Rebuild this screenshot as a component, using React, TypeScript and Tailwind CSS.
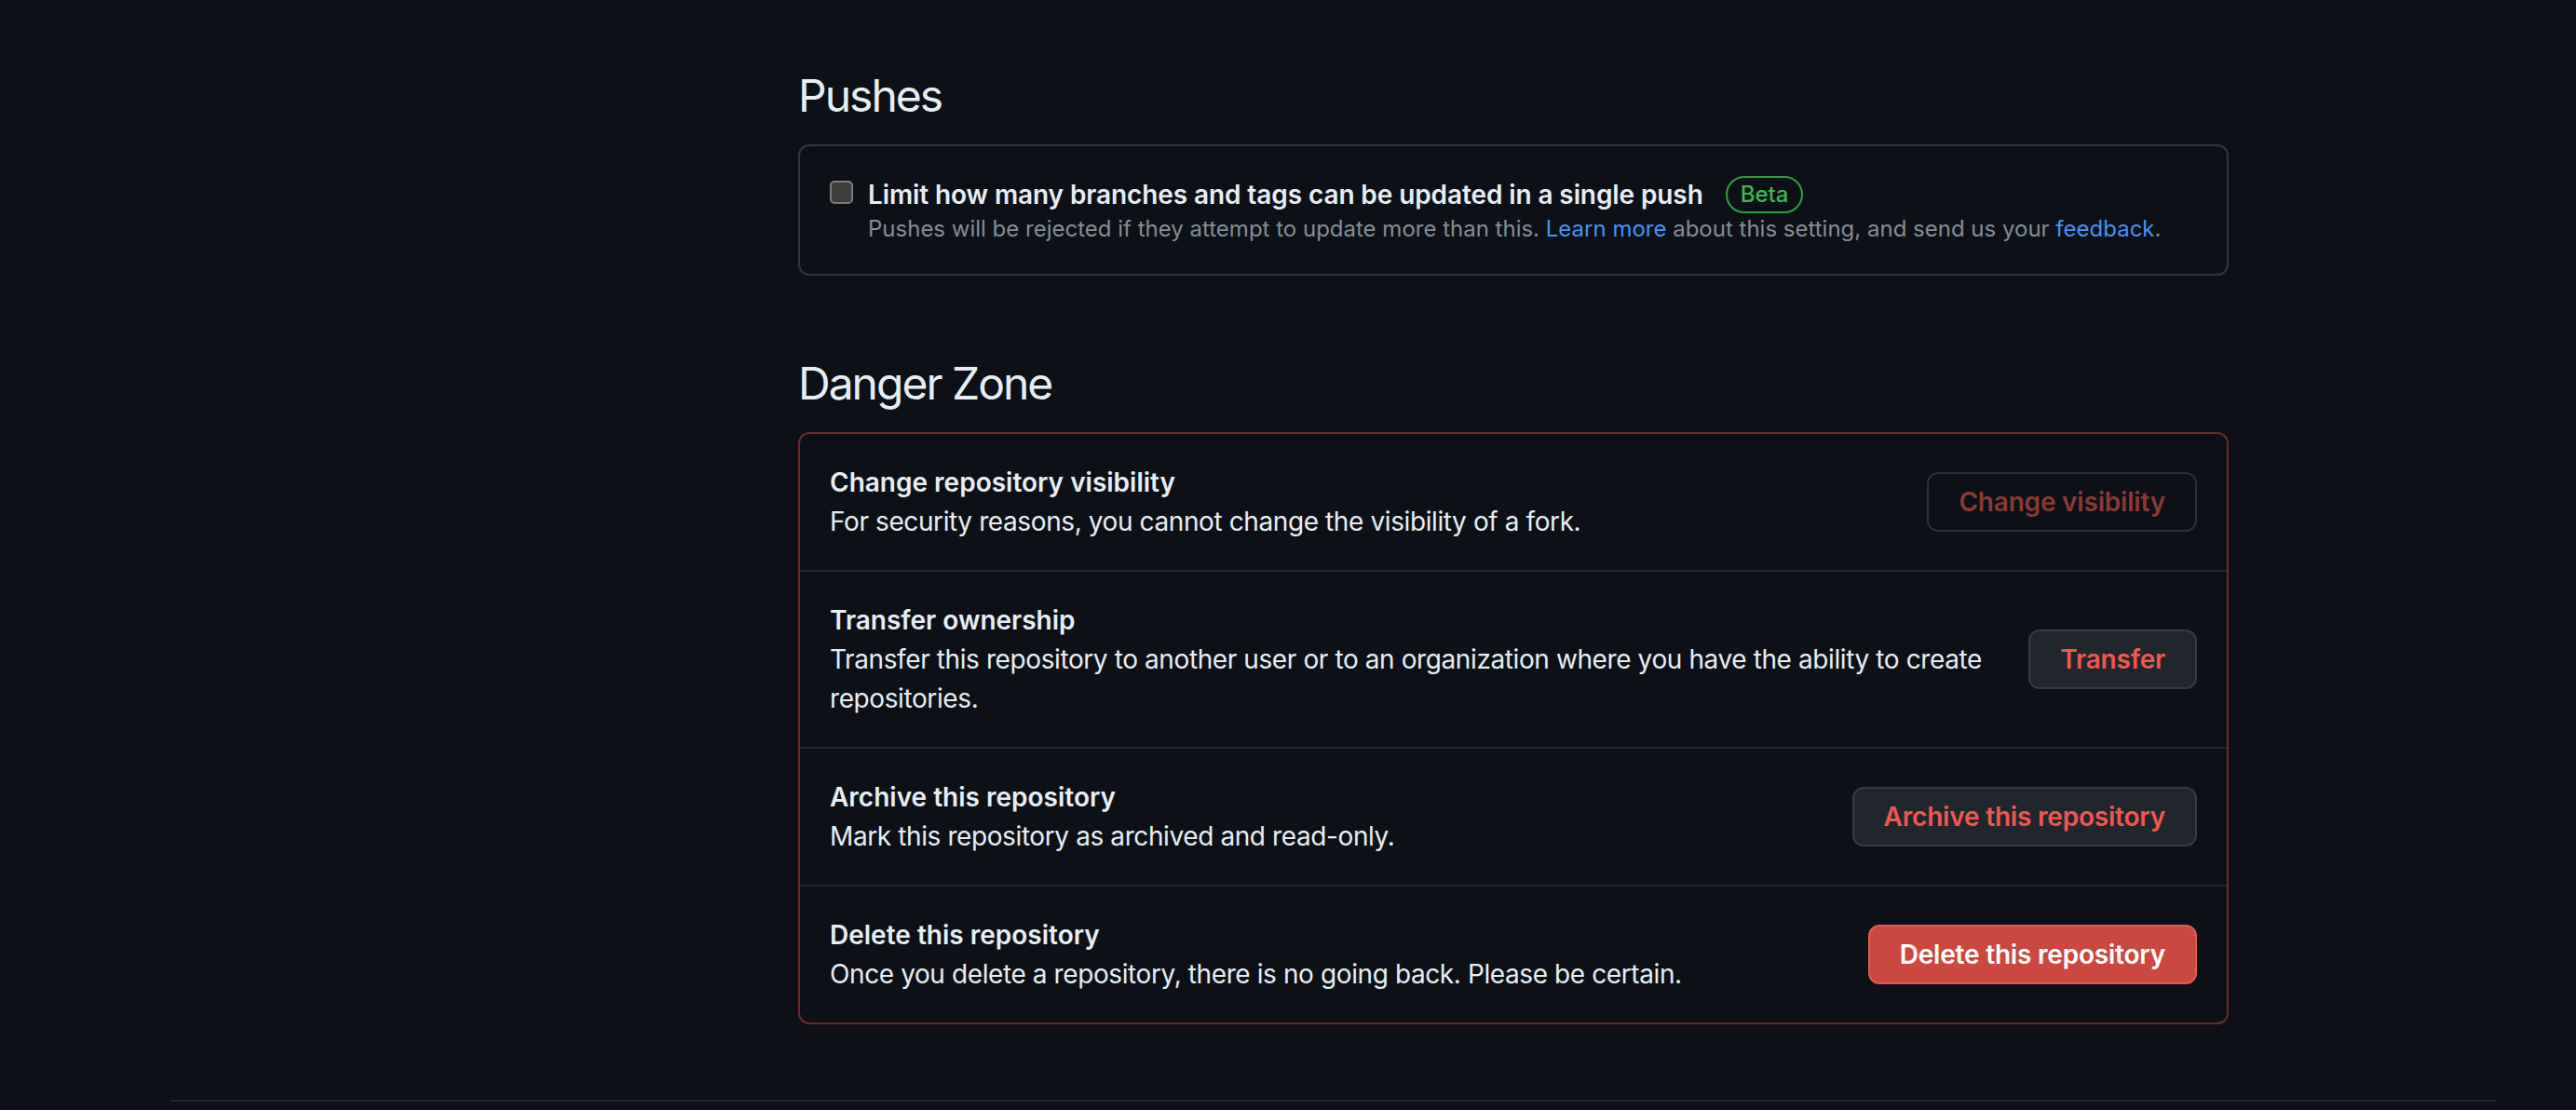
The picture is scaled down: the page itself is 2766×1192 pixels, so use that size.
import React from 'react';

type DangerRow = {
  title: string;
  description: string;
  action: string;
  variant: 'disabled' | 'default' | 'danger';
};

const rows: DangerRow[] = [
  {
    title: 'Change repository visibility',
    description: 'For security reasons, you cannot change the visibility of a fork.',
    action: 'Change visibility',
    variant: 'disabled',
  },
  {
    title: 'Transfer ownership',
    description:
      'Transfer this repository to another user or to an organization where you have the ability to create repositories.',
    action: 'Transfer',
    variant: 'default',
  },
  {
    title: 'Archive this repository',
    description: 'Mark this repository as archived and read-only.',
    action: 'Archive this repository',
    variant: 'default',
  },
  {
    title: 'Delete this repository',
    description: 'Once you delete a repository, there is no going back. Please be certain.',
    action: 'Delete this repository',
    variant: 'danger',
  },
];

const buttonClass: Record<DangerRow['variant'], string> = {
  disabled: 'bg-[#0d1117] border-[#2b3038] text-[#8a3a35] cursor-not-allowed',
  default: 'bg-[#21262d] border-[#363b42] text-[#f0574e]',
  danger: 'bg-[#cb4840] border-[#e25a50] text-white',
};

const Heading = ({ children, className = '' }: { children: React.ReactNode; className?: string }) => (
  <h2 className={`text-[48px] leading-[60px] font-normal tracking-[-2px] text-[#e6edf3] mb-[22px] ${className}`}>
    {children}
  </h2>
);

export default function App() {
  return (
    <div className="min-h-screen w-full bg-[#0d1117] font-['Inter','Noto_Sans',sans-serif] text-[#e6edf3]">
      <div className="ml-[183px] w-[2498px] pb-[40px]">
        <div className="flex">
          <aside className="w-[674px] shrink-0" />
          <main className="w-[1536px] pt-[73px]">
            <Heading>Pushes</Heading>
            <div className="rounded-[12px] border-[2px] border-[#30363d] px-[32px] pt-[32px] pb-[31px]">
              <div className="flex items-start">
                <span className="mt-[5px] mr-[16px] h-[25px] w-[25px] shrink-0 rounded-[5px] border-[2px] border-[#7b7b7b] bg-[#3d3d3d]" />
                <div>
                  <div className="flex h-[40px] items-center">
                    <span className="text-[28px] leading-[40px] font-semibold tracking-[-0.1px]">
                      Limit how many branches and tags can be updated in a single push
                    </span>
                    <span className="ml-[24px] flex h-[40px] items-center rounded-full border-[2px] border-[#2ea043] px-[14px] text-[24px] font-medium text-[#3fb950]">
                      Beta
                    </span>
                  </div>
                  <p className="text-[24px] leading-[34px] text-[#848d97]">
                    Pushes will be rejected if they attempt to update more than this.{' '}
                    <a className="text-[#4493f8]">Learn more</a> about this setting, and send us your{' '}
                    <a className="text-[#4493f8]">feedback</a>.
                  </p>
                </div>
              </div>
            </div>

            <Heading className="mt-[86px]">Danger Zone</Heading>
            <div className="rounded-[12px] border-[2px] border-[#6b2b2b]">
              {rows.map((row, i) => (
                <div
                  key={row.title}
                  className={`flex items-center px-[32px] py-[31px] ${i > 0 ? 'border-t-[2px] border-[#21262d]' : ''}`}
                >
                  <div className="flex-auto pr-[32px] text-[28px] leading-[42px]">
                    <strong className="block font-semibold">{row.title}</strong>
                    <p className="tracking-[-0.4px]">{row.description}</p>
                  </div>
                  <button
                    className={`h-[64px] shrink-0 whitespace-nowrap rounded-[12px] border-[2px] px-[32px] text-[28px] font-semibold tracking-[-0.2px] ${buttonClass[row.variant]}`}
                  >
                    {row.action}
                  </button>
                </div>
              ))}
            </div>
          </main>
        </div>
        <div className="mt-[81px] h-[2px] bg-[#21262d]" />
      </div>
    </div>
  );
}
